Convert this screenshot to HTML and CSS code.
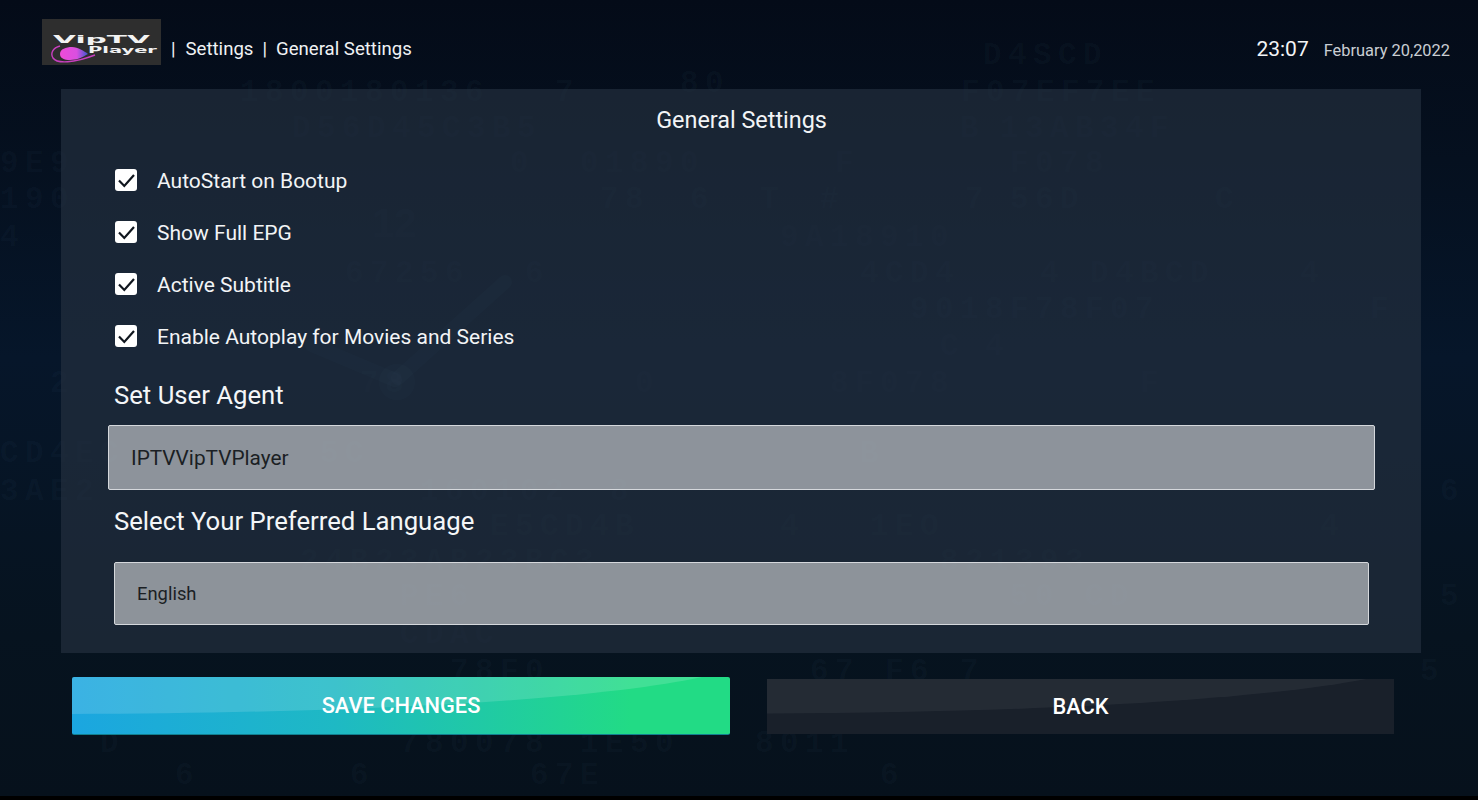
FILE: index.html
```html
<!DOCTYPE html>
<html lang="en">
<head>
  <meta charset="UTF-8" />
  <meta name="viewport" content="width=device-width, initial-scale=1.0"/>
  <title>General Settings</title>
  <link rel="stylesheet" href="styles.css">
</head>
<body>

  <div class="screen">
    <!-- faint wallpaper: hex digits and a clock -->
    <svg class="wallpaper" viewBox="0 0 1478 796" width="1478" height="796" aria-hidden="true">
      <g class="wall-digits">
        <text x="983" y="64">D4SCD</text>
        <text x="240" y="101">1800180136</text><text x="555" y="101">7</text><text x="680" y="92">80</text><text x="961" y="101">F07EF7EE</text>
        <text x="292" y="137">D56D45C3B5</text><text x="960" y="137">B</text><text x="1000" y="137">13AB34F</text>
        <text x="0" y="172">9E9</text><text x="510" y="172">0</text><text x="580" y="172">01890</text><text x="835" y="172">F</text><text x="1010" y="172">F078</text>
        <text x="0" y="208">190</text><text x="600" y="208">78</text><text x="690" y="208">6</text><text x="760" y="208">T</text><text x="820" y="208">#</text><text x="965" y="208">7</text><text x="1010" y="208">56D</text><text x="1215" y="208">C</text>
        <text x="0" y="246">4</text><text x="780" y="246">9A18910</text>
        <text x="345" y="282">67256</text><text x="525" y="282">6</text><text x="860" y="282">4CD4</text><text x="1040" y="282">4</text><text x="1090" y="282">D4BCD</text><text x="1300" y="282">4</text>
        <text x="910" y="318">9018F78F07</text><text x="1370" y="318">F</text>
        <text x="940" y="355">C</text><text x="985" y="355">4</text>
        <text x="50" y="392">2</text><text x="360" y="392">78</text><text x="635" y="392">0</text><text x="830" y="392">8F078</text><text x="1140" y="392">F</text>
        <text x="0" y="462">CD4EC</text><text x="320" y="462">5C</text><text x="860" y="462">B</text>
        <text x="0" y="500">3AE2</text><text x="420" y="500">160102</text><text x="610" y="500">8</text><text x="1440" y="500">6</text>
        <text x="490" y="535">E5CD4B</text><text x="780" y="535">4</text><text x="870" y="535">1EO</text><text x="1320" y="535">4</text>
        <text x="300" y="570">24B23AB23BC3</text><text x="940" y="570">821393</text>
        <text x="400" y="605">PE6</text><text x="1010" y="605">50 CD</text><text x="1440" y="605">5</text>
        <text x="400" y="643">CDAC</text>
        <text x="450" y="680">78F0</text><text x="810" y="680">67 F6 7</text><text x="1420" y="680">5</text>
        <text x="100" y="752">D</text><text x="400" y="752">780078</text><text x="580" y="752">1E50</text><text x="755" y="752">8011</text>
        <text x="175" y="784">6</text><text x="350" y="784">6</text><text x="530" y="784">67E</text><text x="880" y="784">6</text>
      </g>
      <g class="wall-clock">
        <text class="wall-twelve" x="372" y="237">12</text>
        <path class="wall-hand" d="M505 282L398 378"/>
        <path class="wall-hand" d="M312 345L395 380"/>
        <circle cx="397" cy="382" r="18"/>
      </g>
    </svg>

    <header class="top-bar">
      <div class="brand">
        <div class="logo">
          <svg viewBox="0 0 119 46" width="119" height="46">
            <defs>
              <linearGradient id="swoosh" x1="0" x2="1" y1="0" y2="0">
                <stop offset="0" stop-color="#ee4bd8"/>
                <stop offset="0.6" stop-color="#d94fe0"/>
                <stop offset="1" stop-color="#3b57d0"/>
              </linearGradient>
            </defs>
            <path d="M18 27C11 29 8 34 11 39C15 45 32 44 53 36" fill="none" stroke="#c93fc0" stroke-width="1.4"/>
            <path d="M18 35C18 30 24 28 30 28C36 28 42 32 46 35C41 38 35 41 28 41C22 41 18 39 18 35Z" fill="url(#swoosh)"/>
            <text class="logo-vip" x="11" y="24" textLength="97" lengthAdjust="spacingAndGlyphs">VipTV</text>
            <text class="logo-player" x="46" y="34" textLength="69" lengthAdjust="spacingAndGlyphs">Player</text>
          </svg>
        </div>
        <span class="crumb">|</span>
        <span class="crumb">Settings</span>
        <span class="crumb">|</span>
        <span class="crumb">General Settings</span>
      </div>
      <div class="clock">
        <span class="time">23:07</span>
        <span class="date">February 20,2022</span>
      </div>
    </header>

    <main class="panel">
      <h2 class="panel-title">General Settings</h2>

      <div class="check-row">
        <span class="check"><svg viewBox="0 0 22 22"><path d="M4 11.5L9.3 17L19 6"/></svg></span>
        <span>AutoStart on Bootup</span>
      </div>
      <div class="check-row">
        <span class="check"><svg viewBox="0 0 22 22"><path d="M4 11.5L9.3 17L19 6"/></svg></span>
        <span>Show Full EPG</span>
      </div>
      <div class="check-row">
        <span class="check"><svg viewBox="0 0 22 22"><path d="M4 11.5L9.3 17L19 6"/></svg></span>
        <span>Active Subtitle</span>
      </div>
      <div class="check-row">
        <span class="check"><svg viewBox="0 0 22 22"><path d="M4 11.5L9.3 17L19 6"/></svg></span>
        <span>Enable Autoplay for Movies and Series</span>
      </div>

      <h3 class="field-label">Set User Agent</h3>
      <div class="field field-agent">IPTVVipTVPlayer</div>

      <h3 class="field-label field-label-lang">Select Your Preferred Language</h3>
      <div class="field field-lang">English</div>
    </main>

    <div class="actions">
      <button class="btn btn-save">SAVE CHANGES</button>
      <button class="btn btn-back">BACK</button>
    </div>
  </div>

</body>
</html>
```

FILE: styles.css
```css
body {
  margin: 0;
  background-color: #000;
  font-family: Roboto, 'Liberation Sans', sans-serif;
  color: #fff;
  overflow: hidden;
}

.screen {
  position: relative;
  height: 796px;
  overflow: hidden;
  background: linear-gradient(180deg, #040b18 0%, #05101f 20%, #06162a 45%, #06131f 80%, #06111c 100%);
}

.wallpaper {
  position: absolute;
  top: 0;
  left: 0;
}

.wall-digits text {
  font-family: 'Liberation Mono', monospace;
  font-size: 31px;
  font-weight: bold;
  letter-spacing: 6.4px;
  fill: rgba(120, 175, 210, 0.04);
}

.wall-clock {
  fill: rgba(120, 175, 210, 0.05);
}

.wall-twelve {
  font-family: 'Liberation Sans', sans-serif;
  font-size: 40px;
  font-weight: bold;
}

.wall-hand {
  fill: none;
  stroke: rgba(120, 175, 210, 0.05);
  stroke-width: 14;
  stroke-linecap: round;
}

.top-bar {
  position: relative;
  display: flex;
  justify-content: space-between;
  align-items: center;
  height: 46px;
  padding: 19px 28px 0 42px;
}

.brand {
  display: flex;
  align-items: center;
}

.logo {
  width: 119px;
  height: 46px;
  margin-right: 10px;
  background-color: #2e2e2e;
}

.logo svg {
  display: block;
}

.logo-vip {
  font-family: 'DejaVu Sans', sans-serif;
  font-size: 11px;
  font-weight: bold;
  fill: #f2f2f2;
}

.logo-player {
  font-family: 'DejaVu Sans', sans-serif;
  font-size: 9.5px;
  font-weight: bold;
  fill: #f2f2f2;
}

.crumb {
  margin: 14px 9px 0 0;
  font-size: 18.6px;
  color: #f0f2f4;
}

.crumb:nth-child(2) {
  margin-right: 10px;
}

.clock {
  display: flex;
  align-items: baseline;
  gap: 15px;
  margin-top: 14px;
}

.time {
  font-size: 21px;
  color: #f2f4f6;
}

.date {
  font-size: 16.4px;
  color: #c9ced3;
}

.panel {
  position: relative;
  box-sizing: border-box;
  width: 1360px;
  height: 564px;
  margin: 24px 0 0 61px;
  padding: 15px 52px 0 53px;
  background-color: rgba(36, 48, 64, 0.66);
}

.panel-title {
  margin: 0 0 19px;
  font-size: 23.4px;
  font-weight: 400;
  line-height: 32px;
  text-align: center;
  color: #f2f4f6;
}

.check-row {
  display: flex;
  align-items: center;
  gap: 20px;
  height: 52px;
  padding-left: 1px;
  font-size: 21px;
  color: #f2f4f6;
}

.check {
  display: block;
  width: 22px;
  height: 22px;
  margin-top: -2px;
  background-color: #fff;
  border-radius: 3px;
}

.check svg {
  display: block;
  width: 22px;
  height: 22px;
  fill: none;
  stroke: #10161e;
  stroke-width: 2.2;
}

.field-label {
  margin: 14px 0 0;
  font-size: 25.7px;
  font-weight: 400;
  line-height: 36px;
  color: #f4f6f8;
}

.field {
  box-sizing: border-box;
  display: flex;
  align-items: center;
  background-color: rgba(255, 255, 255, 0.5);
  border: 1px solid #d5d8dc;
  border-radius: 2px;
  color: #1b1f24;
}

.field-agent {
  width: 1267px;
  height: 65px;
  margin: 12px 0 0 -6px;
  padding-left: 22px;
  font-size: 20.8px;
}

.field-label-lang {
  margin-top: 13px;
}

.field-lang {
  width: 1255px;
  height: 63px;
  margin-top: 23px;
  padding-left: 22px;
  font-size: 18.4px;
}

.actions {
  position: relative;
  display: flex;
  align-items: center;
  gap: 37px;
  margin: 24px 0 0 72px;
}

.btn {
  position: relative;
  overflow: hidden;
  padding: 0;
  border: none;
  font-family: Roboto, 'Liberation Sans', sans-serif;
  font-size: 21.8px;
  font-weight: 500;
  color: #fff;
  cursor: pointer;
}

/* glossy band across the top of the button */
.btn::before {
  content: "";
  position: absolute;
  top: 0;
  left: 0;
  width: 100%;
  height: 40px;
}

.btn-save {
  width: 658px;
  height: 58px;
  border-radius: 2px;
  background: linear-gradient(90deg, #1ba6e0 0%, #1eb9c4 40%, #22db85 85%, #22db85 100%);
  border-bottom: 1px solid #127f8f;
}

.btn-save::before {
  background-color: rgba(255, 255, 255, 0.14);
  clip-path: path("M0 0H630C530 22 300 36 0 37Z");
}

.btn-back {
  width: 627px;
  height: 55px;
  background-color: #19202a;
}

.btn-back::before {
  background-color: rgba(255, 255, 255, 0.05);
  clip-path: path("M0 0H602C500 20 290 34 0 35Z");
}
```
